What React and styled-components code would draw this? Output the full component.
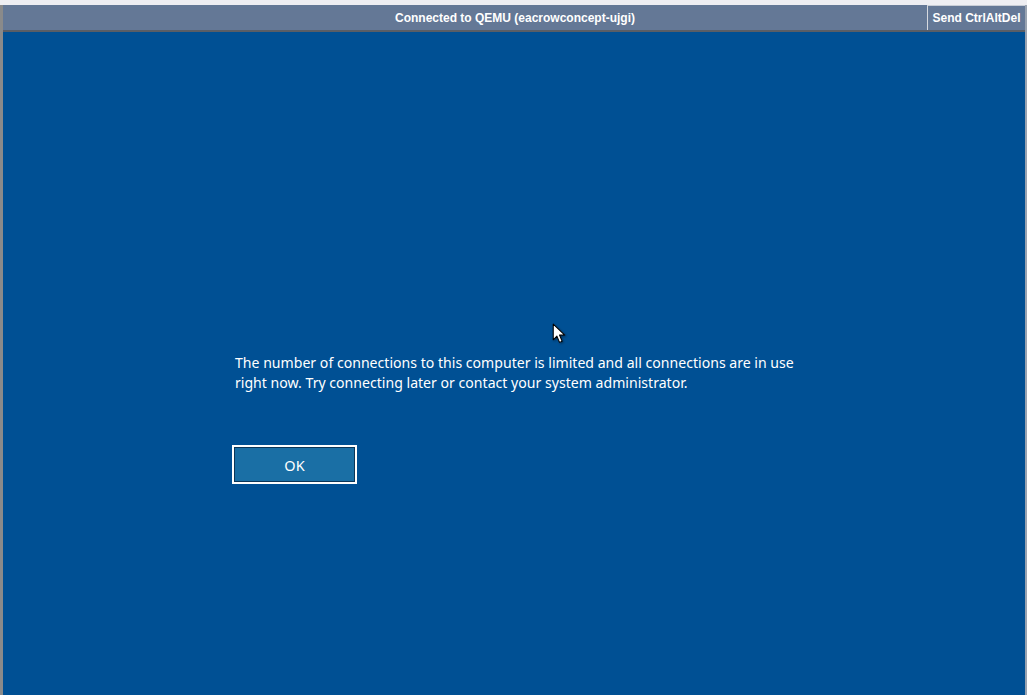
import React from "react";
import styled, { createGlobalStyle } from "styled-components";

const Global = createGlobalStyle`
  html, body {
    margin: 0;
    padding: 0;
    width: 100%;
    height: 100%;
    overflow: hidden;
    background: #eeeef1;
  }
  #root {
    height: 100%;
  }
`;

const App = () => {
  return (
    <>
      <Global />
      <Window>
        <TopStrip />
        <Frame>
          <Toolbar>
            <Status>Connected to QEMU (eacrowconcept-ujgi)</Status>
            <SendButton>Send CtrlAltDel</SendButton>
          </Toolbar>
          <Screen>
            <Dialog>
              <Message>
                The number of connections to this computer is limited and all
                connections are in use right now. Try connecting later or
                contact your system administrator.
              </Message>
              <OkButton>OK</OkButton>
            </Dialog>
            <Cursor viewBox="0 0 13 21" width="14" height="22">
              <path
                d="M1 1 L1 16 L4.5 12.5 L7 18.5 L9.5 17.5 L7 11.5 L12 11.5 Z"
                fill="#fff"
                stroke="#000"
                strokeWidth="1"
                strokeLinejoin="round"
              />
            </Cursor>
          </Screen>
        </Frame>
      </Window>
    </>
  );
};

export default App;

const Window = styled.div`
  display: flex;
  flex-direction: column;
  height: 100%;
`;

const TopStrip = styled.div`
  height: 5px;
  background: #eeeef2;
  flex: none;
`;

const Frame = styled.div`
  flex: 1;
  display: flex;
  flex-direction: column;
  border-left: 3px solid #8a8a8a;
  border-right: 2px solid #9aa3b0;
  min-height: 0;
`;

const Toolbar = styled.div`
  position: relative;
  height: 25px;
  flex: none;
  display: flex;
  align-items: center;
  justify-content: center;
  background: #647896;
  border-bottom: 2px solid #5a5e66;
  font-family: "Liberation Sans", Arial, sans-serif;
  font-weight: bold;
  font-size: 12px;
  color: #fff;
`;

const Status = styled.span`
  margin-left: 2px;
`;

const SendButton = styled.div`
  position: absolute;
  right: 0;
  top: 0;
  bottom: 0;
  width: 98px;
  display: flex;
  align-items: center;
  justify-content: center;
  border-left: 1px solid #d6d9df;
  border-top: 1px solid #c8cdd6;
  box-sizing: border-box;
`;

const Screen = styled.div`
  position: relative;
  flex: 1;
  background: #005094;
  padding: 321px 0 0 229px;
`;

const Dialog = styled.div`
  display: flex;
  flex-direction: column;
  align-items: flex-start;
`;

const Message = styled.p`
  margin: 0;
  width: 580px;
  font-family: "Noto Sans", "Open Sans", sans-serif;
  font-size: 14.1px;
  line-height: 20px;
  color: #fff;
  padding-left: 3px;
`;

const OkButton = styled.div`
  margin-top: 52px;
  width: 121px;
  height: 34px;
  box-sizing: content-box;
  display: flex;
  align-items: center;
  justify-content: center;
  padding-top: 1px;
  background: #1a6fa5;
  border: 2px solid #fff;
  box-shadow: inset 0 0 0 1px #0b3558;
  font-family: "Noto Sans", "Open Sans", sans-serif;
  font-size: 14.5px;
  color: #fff;
`;

const Cursor = styled.svg`
  position: absolute;
  left: 549px;
  top: 291px;
  filter: drop-shadow(1px 1px 1px rgba(0, 0, 0, 0.4));
`;
